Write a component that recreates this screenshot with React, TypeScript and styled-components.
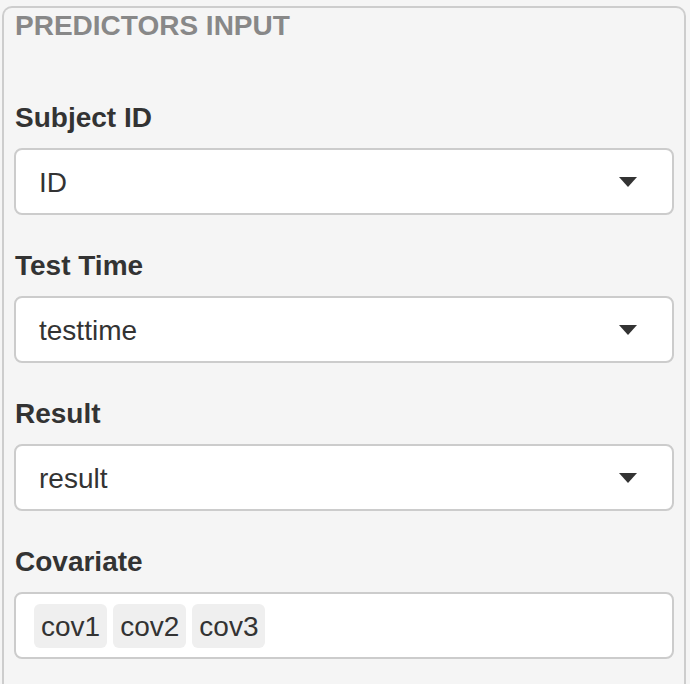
import React from "react";
import styled, { createGlobalStyle } from "styled-components";

const Global = createGlobalStyle`
  html, body {
    margin: 0;
    padding: 0;
    background: #f5f5f5;
  }
  body {
    font-family: "Liberation Sans", Arial, Helvetica, sans-serif;
    color: #333333;
  }
`;

const Panel = styled.section`
  margin: 6px 4px 0 2px;
  height: 690px;
  box-sizing: border-box;
  border: 2px solid #cdcdcd;
  border-bottom: none;
  border-radius: 10px 10px 0 0;
  background: #f5f5f5;
  padding: 2px 10px 0 10px;
  display: flex;
  flex-direction: column;
`;

const Title = styled.h3`
  margin: 0 0 60px 0;
  padding-left: 1px;
  font-size: 28px;
  line-height: 32px;
  font-weight: 700;
  color: #888888;
`;

const Group = styled.div`
  display: flex;
  flex-direction: column;
  margin-bottom: 35px;
`;

const Label = styled.label`
  display: block;
  margin: 0 0 14px 0;
  padding-left: 1px;
  font-size: 28px;
  line-height: 32px;
  font-weight: 700;
  color: #333333;
`;

const Control = styled.div<{ $tags?: boolean }>`
  height: 67px;
  box-sizing: border-box;
  border: 2px solid #cccccc;
  border-radius: 8px;
  background: #ffffff;
  display: flex;
  align-items: center;
  gap: 6px;
  padding: ${(p) => (p.$tags ? "0 18px" : "0 35px 0 23px")};
  font-size: 28px;
  line-height: 32px;
  color: #333333;
`;

const Value = styled.span`
  flex: 1;
  padding-top: 2px;
`;

const Caret = styled.span`
  width: 0;
  height: 0;
  border-left: 9px solid transparent;
  border-right: 9px solid transparent;
  border-top: 10px solid #333333;
`;

const Tag = styled.span`
  height: 44px;
  box-sizing: border-box;
  display: inline-flex;
  align-items: center;
  padding: 2px 7px 0 7px;
  background: #efefef;
  border-radius: 6px;
  font-size: 28px;
  color: #333333;
`;

const selects = [
  { label: "Subject ID", value: "ID" },
  { label: "Test Time", value: "testtime" },
  { label: "Result", value: "result" },
];

export default function App() {
  return (
    <>
      <Global />
      <Panel>
        <Title>PREDICTORS INPUT</Title>
        {selects.map((s) => (
          <Group key={s.label}>
            <Label>{s.label}</Label>
            <Control>
              <Value>{s.value}</Value>
              <Caret />
            </Control>
          </Group>
        ))}
        <Group>
          <Label>Covariate</Label>
          <Control $tags>
            {["cov1", "cov2", "cov3"].map((t) => (
              <Tag key={t}>{t}</Tag>
            ))}
          </Control>
        </Group>
      </Panel>
    </>
  );
}
